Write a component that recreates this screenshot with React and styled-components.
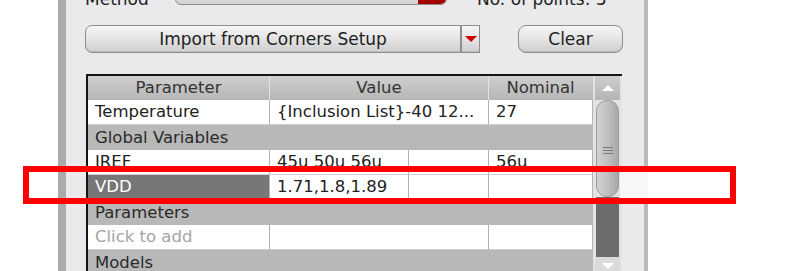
import React from "react";
import styled, { createGlobalStyle } from "styled-components";

const Global = createGlobalStyle`
  html, body { margin: 0; padding: 0; background: #fff; }
  body { font-family: "DejaVu Sans", "Liberation Sans", sans-serif; }
`;

const Page = styled.div`
  position: relative;
  width: 805px;
  height: 271px;
  overflow: hidden;
  background: #fff;
`;

const Dialog = styled.div`
  margin-left: 58px;
  width: 590px;
  height: 271px;
  box-sizing: border-box;
  border-left: 8px solid #ababab;
  border-right: 4px solid #b9b9b9;
  background: #eaeaec;
  padding-left: 19px;
  display: flex;
  flex-direction: column;
  overflow: hidden;
`;

const TopRow = styled.div`
  display: flex;
  align-items: flex-end;
  height: 25px;
  flex: none;
  margin-top: -20px;
`;

const Label = styled.div`
  width: 90px;
  font-size: 17px;
  color: #222;
  line-height: 17px;
  margin-bottom: -3px;
`;

const Combo = styled.div`
  width: 272px;
  height: 24px;
  box-sizing: border-box;
  border: 1px solid #8c8c8c;
  border-radius: 0 0 6px 6px;
  background: linear-gradient(#f4f4f4, #d2d2d2);
  display: flex;
  justify-content: flex-end;
  overflow: hidden;
`;

const ComboArrow = styled.div`
  width: 28px;
  background: linear-gradient(#d40000, #a00000);
  border-radius: 0 0 5px 0;
`;

const Points = styled.div`
  margin-left: 30px;
  font-size: 17px;
  color: #222;
  line-height: 17px;
  margin-bottom: -3px;
`;

const ButtonRow = styled.div`
  display: flex;
  align-items: stretch;
  height: 28px;
  flex: none;
  margin-top: 20px;
`;

const Button = styled.div`
  width: ${(p) => p.$w}px;
  box-sizing: border-box;
  border: 1px solid #8e8e8e;
  border-radius: ${(p) => p.$radius};
  background: linear-gradient(#f6f6f6 0%, #e4e4e4 50%, #cfcfcf 100%);
  box-shadow: inset 0 -1px 0 #bdbdbd;
  display: flex;
  align-items: center;
  justify-content: center;
  font-size: 17px;
  color: #222;
  margin-left: ${(p) => p.$ml || 0}px;
`;

const Tri = styled.div`
  width: 0;
  height: 0;
  border-left: 6px solid transparent;
  border-right: 6px solid transparent;
  border-top: 6px solid ${(p) => p.$color};
  ${(p) => p.$up && `border-top: none; border-bottom: 6px solid ${p.$color};`}
`;

const Table = styled.div`
  margin-top: 21px;
  margin-left: 1px;
  width: 536px;
  flex: none;
  height: 210px;
  box-sizing: border-box;
  border-top: 2px solid #151515;
  border-left: 2px solid #151515;
  display: flex;
  background: #eaeaec;
`;

const Grid = styled.div`
  width: 505px;
  display: flex;
  flex-direction: column;
`;

const Row = styled.div`
  display: flex;
  height: ${(p) => (p.$header ? 24 : 25)}px;
  flex: none;
`;

const HeadCell = styled.div`
  width: ${(p) => p.$w}px;
  box-sizing: border-box;
  border-right: 1px solid ${(p) => (p.$last ? "transparent" : "#e2e2e2")};
  background: linear-gradient(#cfcfcf, #b6b6b6);
  text-align: center;
  font-size: 16.5px;
  line-height: 24px;
  color: #333;
`;

const Cell = styled.div`
  width: ${(p) => p.$w}px;
  box-sizing: border-box;
  border-right: 1px solid #b4b4b4;
  border-bottom: 1px solid #d0d0d0;
  background: ${(p) => (p.$selected ? "#777777" : "#fff")};
  color: ${(p) => (p.$selected ? "#fff" : p.$hint ? "#a4a4a4" : "#222")};
  font-size: 16.5px;
  line-height: 24px;
  padding-left: 7px;
  white-space: nowrap;
  overflow: hidden;
`;

const GroupRow = styled.div`
  height: 25px;
  flex: none;
  background: #b8b8b8;
  color: #2a2a2a;
  font-size: 16.5px;
  line-height: 25px;
  padding-left: 7px;
`;

const Scroll = styled.div`
  width: 29px;
  box-sizing: border-box;
  padding: 0 2px;
  background: #e3e3e5;
  display: flex;
  flex-direction: column;
`;

const ScrollBtn = styled.div`
  height: ${(p) => p.$h}px;
  flex: none;
  background: ${(p) => p.$bg};
  display: flex;
  justify-content: center;
  align-items: ${(p) => (p.$bottom ? "flex-start" : "center")};
  padding-top: ${(p) => (p.$bottom ? 6 : 0)}px;
  box-sizing: border-box;
`;

const Thumb = styled.div`
  height: 97px;
  flex: none;
  margin: 0 1px;
  border: 1px solid #9a9a9a;
  border-radius: 11px;
  box-sizing: border-box;
  background: linear-gradient(90deg, #d2d2d2, #bcbcbc 60%, #a8a8a8);
  display: flex;
  align-items: center;
  justify-content: center;
  padding-top: 6px;
`;

const Grip = styled.div`
  width: 10px;
  height: 9px;
  background: repeating-linear-gradient(#7a7a7a 0 1px, transparent 1px 3px);
`;

const Track = styled.div`
  height: 60px;
  flex: none;
  margin: 0 1px;
  background: #6c6c6c;
`;

const Highlight = styled.div`
  position: absolute;
  left: 23px;
  top: 166px;
  width: 713px;
  height: 38px;
  box-sizing: border-box;
  border: 6px solid #ff0000;
  pointer-events: none;
`;

const Glare = styled.div`
  position: absolute;
  left: 620px;
  top: 172px;
  width: 28px;
  height: 26px;
  background: #f7f7f8;
`;

const COLS = [182, 219, 104];

function DataRow({ name, value, extra, nominal, selected, hint, split }) {
  return (
    <Row>
      <Cell $w={COLS[0]} $selected={selected} $hint={hint}>
        {name}
      </Cell>
      {split ? (
        <>
          <Cell $w={139}>{value}</Cell>
          <Cell $w={80}>{extra}</Cell>
        </>
      ) : (
        <Cell $w={COLS[1]}>{value}</Cell>
      )}
      <Cell $w={COLS[2]}>{nominal}</Cell>
    </Row>
  );
}

export default function App() {
  return (
    <Page>
      <Global />
      <Dialog>
        <TopRow>
          <Label>Method</Label>
          <Combo>
            <ComboArrow />
          </Combo>
          <Points>No. of points: 3</Points>
        </TopRow>
        <ButtonRow>
          <Button $w={376} $radius="7px 0 0 7px">
            Import from Corners Setup
          </Button>
          <Button $w={19} $radius="0">
            <Tri $color="#d00000" />
          </Button>
          <Button $w={105} $radius="8px" $ml={38}>
            Clear
          </Button>
        </ButtonRow>
        <Table>
          <Grid>
            <Row $header>
              <HeadCell $w={COLS[0]}>Parameter</HeadCell>
              <HeadCell $w={COLS[1]}>Value</HeadCell>
              <HeadCell $w={COLS[2]} $last>
                Nominal
              </HeadCell>
            </Row>
            <DataRow name="Temperature" value="{Inclusion List}-40 12..." nominal="27" />
            <GroupRow>Global Variables</GroupRow>
            <DataRow name="IREF" value="45u 50u 56u" nominal="56u" split />
            <DataRow name="VDD" value="1.71,1.8,1.89" selected split />
            <GroupRow>Parameters</GroupRow>
            <DataRow name="Click to add" hint />
            <GroupRow>Models</GroupRow>
          </Grid>
          <Scroll>
            <ScrollBtn $h={24} $bg="linear-gradient(#cdcdcd, #b5b5b5)">
              <Tri $color="#fff" $up />
            </ScrollBtn>
            <Thumb>
              <Grip />
            </Thumb>
            <Track />
            <ScrollBtn $h={20} $bg="#dadada" $bottom>
              <Tri $color="#fff" />
            </ScrollBtn>
          </Scroll>
        </Table>
      </Dialog>
      <Glare />
      <Highlight />
    </Page>
  );
}
